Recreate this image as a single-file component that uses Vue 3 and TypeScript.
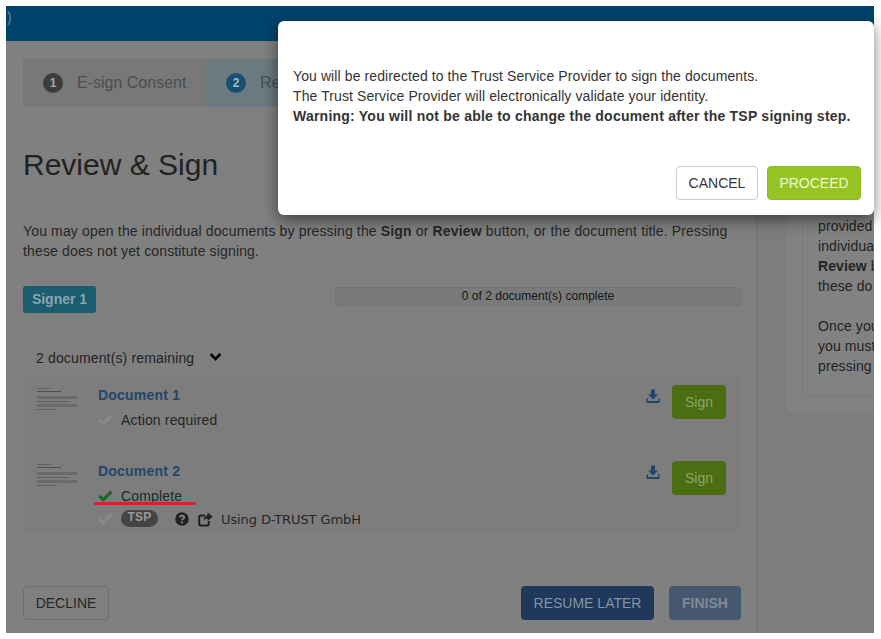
<script setup lang="ts">
interface Doc {
  name: string;
  status: string;
  done: boolean;
  tsp: boolean;
}

const docs: Doc[] = [
  { name: 'Document 1', status: 'Action required', done: false, tsp: false },
  { name: 'Document 2', status: 'Complete', done: true, tsp: true },
];
</script>

<template>
  <div class="page">
    <div class="shell">
      <header class="topbar"><span class="paren">)</span></header>
      <div class="content">
        <main class="main">
          <div class="steps">
            <div class="step step-one"><span class="num">1</span>E-sign Consent</div>
            <div class="step step-two"><span class="num">2</span>Review &amp; Sign</div>
          </div>
          <h1>Review &amp; Sign</h1>
          <p class="intro">
            You may open the individual documents by pressing the <b>Sign</b> or <b>Review</b> button, or the document title. Pressing these does not yet constitute signing.
          </p>
          <div class="signer-row">
            <span class="signer">Signer 1</span>
            <div class="progress">0 of 2 document(s) complete</div>
          </div>
          <div class="remaining">
            2 document(s) remaining
            <svg class="chevron" width="13" height="10" viewBox="0 0 13 10">
              <path d="M1.6 2 6.5 7 11.4 2" fill="none" stroke="#0c0c0c" stroke-width="2.8" />
            </svg>
          </div>
          <div class="doc-list">
            <div v-for="doc in docs" :key="doc.name" class="doc">
              <div class="thumb">
                <i class="l1"></i><i class="l2"></i><i class="block"></i><i class="l3"></i><i class="block"></i><i class="l4"></i>
              </div>
              <div class="doc-info">
                <a class="doc-name">{{ doc.name }}</a>
                <div class="status">
                  <svg class="check" width="15" height="12" viewBox="0 0 15 12">
                    <path d="M1.5 6 5.4 9.6 13.5 1.6" fill="none" :stroke="doc.done ? '#27602a' : '#8a8a8a'" stroke-width="3.2" />
                  </svg>
                  <span>{{ doc.status }}</span>
                </div>
                <div v-if="doc.tsp" class="tsp-row">
                  <svg class="check" width="15" height="12" viewBox="0 0 15 12">
                    <path d="M1.5 6 5.4 9.6 13.5 1.6" fill="none" stroke="#8a8a8a" stroke-width="3.2" />
                  </svg>
                  <span class="tsp">TSP</span>
                  <svg class="help" width="14" height="14" viewBox="0 0 14 14">
                    <circle cx="7" cy="7" r="6.8" fill="#222" />
                    <path d="M4.9 5.4C5 2.9 9.2 3 9.2 5.3 9.2 6.9 7 6.8 7 8.3" fill="none" stroke="#8c8c8c" stroke-width="1.7" />
                    <rect x="6.1" y="9.4" width="1.8" height="1.8" fill="#8c8c8c" />
                  </svg>
                  <svg class="link" width="15" height="15" viewBox="0 0 15 15">
                    <path d="M7 3.6H3Q1.2 3.6 1.2 5.4V11.8Q1.2 13.6 3 13.6H9Q10.8 13.6 10.8 11.8V9" fill="none" stroke="#222" stroke-width="2" />
                    <path d="M9.5 0.5 14.8 4.8 9.5 9V6.8C7.6 6.8 6.3 7.4 5.5 9 5.5 6 7.2 3.4 9.5 3.2Z" fill="#222" />
                  </svg>
                  <span class="using">Using D-TRUST GmbH</span>
                </div>
              </div>
              <svg class="download" width="14" height="15" viewBox="0 0 14 15">
                <path d="M5 0.5H9V5.5H12L7 10.5 2 5.5H5Z" fill="#21466c" />
                <path d="M0.5 9.5V14H13.5V9.5H12V12H2V9.5Z" fill="#21466c" />
              </svg>
              <button class="sign">Sign</button>
            </div>
          </div>
          <div class="underline"></div>
          <div class="actions">
            <button class="decline">DECLINE</button>
            <button class="resume">RESUME LATER</button>
            <button class="finish">FINISH</button>
          </div>
        </main>
        <aside class="side">
          <div class="side-card">
            <div class="side-inner">
              <p>provided<br />individual<br /><b>Review</b> b<br />these do</p>
              <p>Once you<br />you must<br />pressing</p>
            </div>
          </div>
        </aside>
      </div>
    </div>

    <div class="modal">
      <div class="modal-text">
        You will be redirected to the Trust Service Provider to sign the documents.<br />
        The Trust Service Provider will electronically validate your identity.<br />
        <b>Warning: You will not be able to change the document after the TSP signing step.</b>
      </div>
      <div class="modal-buttons">
        <button class="cancel">CANCEL</button>
        <button class="proceed">PROCEED</button>
      </div>
    </div>
  </div>
</template>

<style>
html,
body {
  margin: 0;
  background: #fff;
}
</style>

<style scoped>
.page {
  position: relative;
  width: 881px;
  height: 639px;
  padding: 6px 7px 6px 6px;
  box-sizing: border-box;
  overflow: hidden;
  font-family: "Liberation Sans", Arial, sans-serif;
  font-size: 14px;
  color: #1e1e1e;
}

.shell {
  height: 100%;
  display: flex;
  flex-direction: column;
  background: #7d7d7d;
  box-shadow: inset 1px 0 0 #6c6c6c;
  overflow: hidden;
}

.topbar {
  flex: 0 0 35px;
  background: #00436b;
  color: #6f8aa0;
  font-size: 14px;
  line-height: 23px;
}

.paren {
  margin-left: 1px;
}

.content {
  flex: 1;
  display: flex;
  min-height: 0;
}

.main {
  flex: 0 0 751px;
  box-sizing: border-box;
  padding: 18px 15px 0 17px;
  border-right: 1px solid #747474;
  position: relative;
  background: #808080;
  letter-spacing: 0.15px;
}

.steps {
  display: flex;
  height: 48px;
}

.step {
  display: flex;
  align-items: center;
  box-sizing: border-box;
  font-size: 16px;
  letter-spacing: 0;
  color: #4e4e4e;
  padding-left: 20px;
}

.step-one {
  width: 183px;
  background: #787878;
}

.step-two {
  flex: 1;
  background: #6b7980;
  color: #44505a;
}

.num {
  width: 20px;
  height: 20px;
  border-radius: 50%;
  margin-right: 14px;
  background: #3c3c3c;
  color: #a8a8a8;
  font-size: 12px;
  font-weight: bold;
  text-align: center;
  line-height: 20px;
}

.step-two .num {
  background: #17506e;
  color: #a5bac6;
}

h1 {
  margin: 41px 0 0;
  font-size: 30px;
  font-weight: 400;
  letter-spacing: 0;
  line-height: 33px;
  color: #222;
}

.intro {
  margin: 40px 0 0;
  line-height: 20px;
  color: #262626;
}

.signer-row {
  display: flex;
  align-items: center;
  justify-content: space-between;
  margin-top: 25px;
}

.signer {
  width: 73px;
  height: 27px;
  border-radius: 3px;
  background: #1b5c6e;
  color: #8aa6ae;
  font-size: 14px;
  font-weight: bold;
  letter-spacing: 0;
  text-align: center;
  line-height: 27px;
}

.progress {
  width: 406px;
  height: 19px;
  margin-bottom: 7px;
  box-sizing: border-box;
  border: 1px solid #747474;
  border-radius: 3px;
  background: #7a7a7a;
  color: #161616;
  font-size: 12px;
  letter-spacing: 0.02px;
  text-align: center;
  line-height: 17px;
}

.remaining {
  display: flex;
  align-items: center;
  height: 62px;
  padding: 28px 0 0 13px;
  box-sizing: border-box;
  color: #222;
}

.chevron {
  margin-left: 15px;
  margin-top: -3px;
}

.doc-list {
  background: #7d7d7d;
  height: 158px;
}

.doc {
  display: flex;
  align-items: flex-start;
  height: 76px;
  padding-top: 10px;
  box-sizing: border-box;
  position: relative;
}

.thumb {
  width: 40px;
  height: 36px;
  margin: 3px 0 0 14px;
  display: flex;
  flex-direction: column;
  gap: 2px;
}

.thumb i {
  display: block;
  height: 1px;
  background: #5f5f5f;
}

.thumb .l1 {
  width: 14px;
}

.thumb .l2 {
  width: 24px;
  background: #505050;
  margin-bottom: 2px;
}

.thumb .block {
  height: 3px;
  background: #6a6a6a;
}

.thumb .l3 {
  width: 32px;
}

.thumb .l4 {
  width: 20px;
}

.doc-info {
  flex: 1;
  margin-left: 21px;
}

.doc-name {
  display: block;
  color: #25476b;
  font-weight: bold;
  letter-spacing: 0.2px;
  line-height: 20px;
}

.status {
  display: flex;
  align-items: center;
  margin-top: 5px;
  height: 20px;
  color: #262626;
}

.check {
  flex: none;
  margin-right: 8px;
}

.tsp-row {
  display: flex;
  align-items: center;
  height: 20px;
  margin-top: 3px;
}

.tsp {
  width: 37px;
  height: 17px;
  margin-bottom: 1px;
  border-radius: 9px;
  background: #444;
  color: #9a9a9a;
  font-size: 12px;
  font-weight: bold;
  letter-spacing: 0.3px;
  text-align: center;
  line-height: 15px;
}

.help {
  margin-left: 17px;
}

.link {
  margin-left: 9px;
}

.using {
  margin-left: 8px;
  font-family: "DejaVu Sans", sans-serif;
  font-size: 13px;
  letter-spacing: -0.1px;
  color: #262626;
}

.download {
  margin: 4px 12px 0 0;
}

button {
  font-family: inherit;
  box-sizing: border-box;
  border-radius: 4px;
  padding: 0;
  border: 1px solid transparent;
}

.sign {
  width: 54px;
  height: 34px;
  margin-right: 15px;
  background: #4b6e13;
  color: #8ea468;
  font-size: 14px;
}

.underline {
  position: absolute;
  left: 88px;
  top: 461px;
  width: 102px;
  height: 3px;
  background: #d8222a;
  border-radius: 2px;
}

.actions {
  display: flex;
  align-items: center;
  margin-top: 53px;
}

.actions button {
  height: 34px;
  font-size: 14px;
}

.decline {
  width: 86px;
  background: transparent;
  border-color: #6e6e6e;
  color: #262626;
  margin-right: auto;
}

.resume {
  width: 133px;
  background: #1f385c;
  color: #8494a6;
}

.finish {
  width: 72px;
  margin-left: 15px;
  background: #465870;
  color: #808a96;
  font-weight: bold;
}

.side {
  flex: 1;
  padding-left: 30px;
  min-width: 0;
  overflow: hidden;
}

.side-card {
  box-sizing: border-box;
  width: 120px;
  height: 239px;
  margin-top: 132px;
  padding: 0 0 15px 15px;
  background: #828282;
}

.side-inner {
  box-sizing: border-box;
  height: 100%;
  padding: 43px 0 0 15px;
  border-left: 1px solid #7a7a7a;
  border-bottom: 1px solid #7a7a7a;
  color: #222;
  line-height: 20px;
  letter-spacing: 0.1px;
  white-space: nowrap;
}

.side-inner p {
  margin: 0 0 20px;
}

.modal {
  position: absolute;
  left: 278px;
  top: 21px;
  width: 596px;
  height: 194px;
  box-sizing: border-box;
  padding: 45px 15px 0;
  background: #fff;
  border-radius: 6px;
  box-shadow: 0 5px 15px rgba(0, 0, 0, 0.5);
}

.modal-text {
  line-height: 20px;
  color: #333;
  letter-spacing: 0.1px;
}

.modal-text b {
  letter-spacing: 0.23px;
}

.modal-buttons {
  display: flex;
  justify-content: flex-end;
  gap: 9px;
  margin: 40px -2px 0 0;
}

.modal-buttons button {
  height: 34px;
  font-size: 14px;
}

.cancel {
  width: 82px;
  background: #fff;
  border-color: #ccc;
  color: #333;
}

.proceed {
  width: 94px;
  background: #96c423;
  border-color: #8dbb1a;
  color: #f1f7d8;
}
</style>
